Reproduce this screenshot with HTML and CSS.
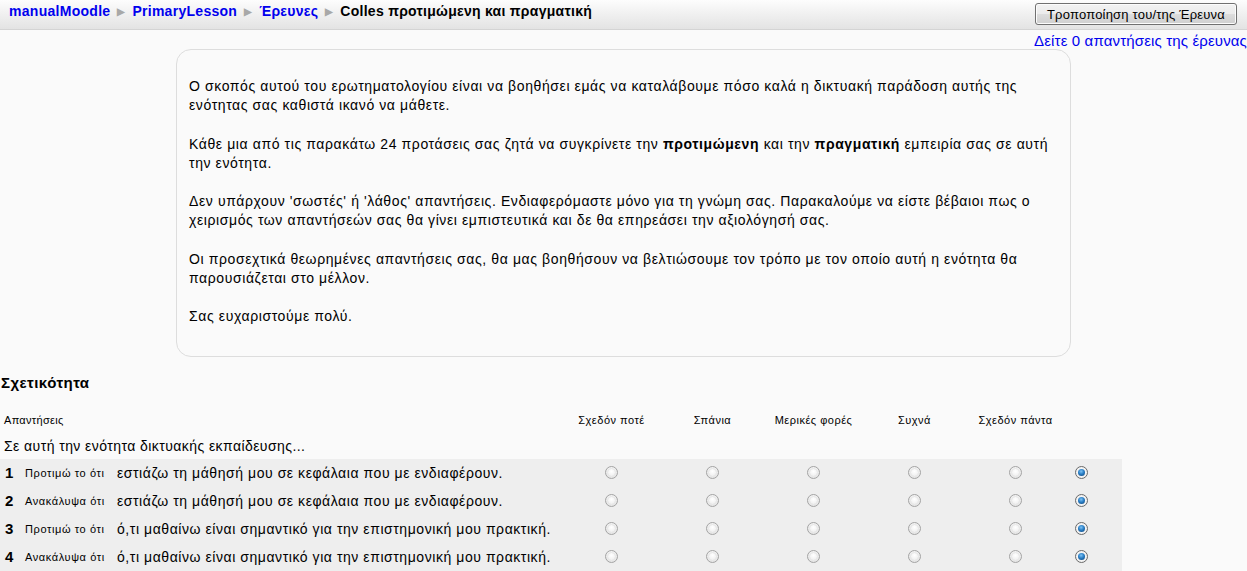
FILE: index.html
```html
<!DOCTYPE html>
<html lang="el">
<head>
<meta charset="utf-8">
<title>Colles προτιμώμενη και πραγματική</title>
<link rel="stylesheet" href="styles.css">
</head>
<body>
<header class="navbar">
  <nav class="breadcrumb">
    <a href="#">manualMoodle</a><span class="sep">&#9654;</span><a href="#">PrimaryLesson</a><span class="sep">&#9654;</span><a href="#">Έρευνες</a><span class="sep">&#9654;</span><span class="current">Colles προτιμώμενη και πραγματική</span>
  </nav>
  <button class="edit-btn" type="button">Τροποποίηση του/της Έρευνα</button>
</header>
<div class="reports"><a href="#">Δείτε 0 απαντήσεις της έρευνας</a></div>
<div class="intro-box">
  <p>Ο σκοπός αυτού του ερωτηματολογίου είναι να βοηθήσει εμάς να καταλάβουμε πόσο καλά η δικτυακή παράδοση αυτής της ενότητας σας καθιστά ικανό να μάθετε.</p>
  <p>Κάθε μια από τις παρακάτω 24 προτάσεις σας ζητά να συγκρίνετε την <b>προτιμώμενη</b> και την <b>πραγματική</b> εμπειρία σας σε αυτή την ενότητα.</p>
  <p>Δεν υπάρχουν 'σωστές' ή 'λάθος' απαντήσεις. Ενδιαφερόμαστε μόνο για τη γνώμη σας. Παρακαλούμε να είστε βέβαιοι πως ο χειρισμός των απαντήσεών σας θα γίνει εμπιστευτικά και δε θα επηρεάσει την αξιολόγησή σας.</p>
  <p>Οι προσεχτικά θεωρημένες απαντήσεις σας, θα μας βοηθήσουν να βελτιώσουμε τον τρόπο με τον οποίο αυτή η ενότητα θα παρουσιάζεται στο μέλλον.</p>
  <p>Σας ευχαριστούμε πολύ.</p>
</div>
<h2 class="section-title">Σχετικότητα</h2>
<div class="survey">
  <div class="grid head">
    <div class="cell-first small answers">Απαντήσεις</div>
    <div class="col small">Σχεδόν ποτέ</div>
    <div class="col small">Σπάνια</div>
    <div class="col small">Μερικές φορές</div>
    <div class="col small">Συχνά</div>
    <div class="col small">Σχεδόν πάντα</div>
    <div class="col"></div>
  </div>
  <div class="intro-q">Σε αυτή την ενότητα δικτυακής εκπαίδευσης...</div>
  <div class="grid row">
    <div class="cell-first"><span class="num">1</span><span class="lbl">Προτιμώ το ότι</span><span class="q">εστιάζω τη μάθησή μου σε κεφάλαια που με ενδιαφέρουν.</span></div>
    <div class="col"><input type="radio" name="q1"></div>
    <div class="col"><input type="radio" name="q1"></div>
    <div class="col"><input type="radio" name="q1"></div>
    <div class="col"><input type="radio" name="q1"></div>
    <div class="col"><input type="radio" name="q1"></div>
    <div class="col"><input type="radio" name="q1" checked></div>
  </div>
  <div class="grid row">
    <div class="cell-first"><span class="num">2</span><span class="lbl">Ανακάλυψα ότι</span><span class="q">εστιάζω τη μάθησή μου σε κεφάλαια που με ενδιαφέρουν.</span></div>
    <div class="col"><input type="radio" name="q2"></div>
    <div class="col"><input type="radio" name="q2"></div>
    <div class="col"><input type="radio" name="q2"></div>
    <div class="col"><input type="radio" name="q2"></div>
    <div class="col"><input type="radio" name="q2"></div>
    <div class="col"><input type="radio" name="q2" checked></div>
  </div>
  <div class="grid row">
    <div class="cell-first"><span class="num">3</span><span class="lbl">Προτιμώ το ότι</span><span class="q">ό,τι μαθαίνω είναι σημαντικό για την επιστημονική μου πρακτική.</span></div>
    <div class="col"><input type="radio" name="q3"></div>
    <div class="col"><input type="radio" name="q3"></div>
    <div class="col"><input type="radio" name="q3"></div>
    <div class="col"><input type="radio" name="q3"></div>
    <div class="col"><input type="radio" name="q3"></div>
    <div class="col"><input type="radio" name="q3" checked></div>
  </div>
  <div class="grid row">
    <div class="cell-first"><span class="num">4</span><span class="lbl">Ανακάλυψα ότι</span><span class="q">ό,τι μαθαίνω είναι σημαντικό για την επιστημονική μου πρακτική.</span></div>
    <div class="col"><input type="radio" name="q4"></div>
    <div class="col"><input type="radio" name="q4"></div>
    <div class="col"><input type="radio" name="q4"></div>
    <div class="col"><input type="radio" name="q4"></div>
    <div class="col"><input type="radio" name="q4"></div>
    <div class="col"><input type="radio" name="q4" checked></div>
  </div>
</div>
</body>
</html>
```

FILE: styles.css
```css
html, body {
  margin: 0;
  padding: 0;
}
body {
  background: #fafafa;
  font-family: "Liberation Sans", Arial, sans-serif;
  font-size: 14px;
  color: #000;
  overflow: hidden;
}
a {
  color: #0000ee;
  text-decoration: none;
}
.navbar {
  height: 29px;
  border-bottom: 1px solid #d4d4d4;
  background: linear-gradient(to bottom, #fdfdfd 0%, #f1f1f1 45%, #e3e3e3 100%);
  display: flex;
  justify-content: space-between;
  align-items: flex-start;
}
.breadcrumb {
  padding: 3px 0 0 9px;
  line-height: 16px;
  font-size: 14px;
  font-weight: bold;
  letter-spacing: 0.28px;
  white-space: nowrap;
}
.breadcrumb .sep {
  color: #a8a8a8;
  font-size: 10px;
  letter-spacing: 0;
  margin: 0 7px 0 7px;
  position: relative;
  top: -1px;
}
.breadcrumb .current {
  color: #000;
}
.edit-btn {
  margin: 3px 10px 0 0;
  height: 22px;
  width: 202px;
  padding: 0 6px;
  font-family: "Liberation Sans", Arial, sans-serif;
  font-size: 13px;
  letter-spacing: 0.2px;
  color: #000;
  border: 1px solid #707070;
  border-radius: 3px;
  background: linear-gradient(to bottom, #f2f2f2 0%, #ebebeb 50%, #dddddd 51%, #cfcfcf 100%);
  box-shadow: inset 0 0 0 1px #fcfcfc;
}
.reports {
  text-align: right;
  font-size: 15px;
  line-height: 17px;
  margin-top: 2px;
  letter-spacing: 0.15px;
  white-space: nowrap;
}
.intro-box {
  box-sizing: border-box;
  width: 895px;
  margin-left: 176px;
  padding: 27px 12px 29px 12px;
  border: 1px solid #dddddd;
  border-radius: 15px;
  background: #fafafa;
  line-height: 19.2px;
  letter-spacing: 0.6px;
}
.intro-box p {
  margin: 0 0 19.2px 0;
}
.intro-box p:last-child {
  margin-bottom: 0;
}
.section-title {
  margin: 17px 0 0 0;
  padding-left: 1px;
  font-size: 15px;
  line-height: 18px;
  font-weight: bold;
  letter-spacing: 0.45px;
}
.survey {
  width: 1122px;
}
.grid {
  display: grid;
  grid-template-columns: 561px repeat(5, 101px) 30px;
  align-items: center;
}
.small {
  font-size: 11px;
  letter-spacing: 0.5px;
}
.head {
  margin-top: 20px;
  line-height: 16px;
}
.head .cell-first {
  padding-left: 4px;
}
.head .answers {
  letter-spacing: 0.3px;
}
.col {
  text-align: center;
  display: flex;
  justify-content: center;
  align-items: center;
}
.intro-q {
  padding: 9px 0 4px 4px;
  line-height: 18px;
  font-size: 14px;
  letter-spacing: 0.43px;
}
.row {
  height: 28px;
  background: #eeeeee;
}
.cell-first {
  display: flex;
  align-items: center;
  white-space: nowrap;
}
.num {
  width: 25px;
  padding-left: 5px;
  box-sizing: border-box;
  font-weight: bold;
  font-size: 15px;
}
.lbl {
  width: 92px;
  font-size: 11px;
  letter-spacing: 0.6px;
}
.q {
  font-size: 14px;
  letter-spacing: 0.56px;
}
input[type="radio"] {
  -webkit-appearance: none;
  appearance: none;
  margin: 0;
  width: 13px;
  height: 13px;
  border-radius: 50%;
  border: 1px solid #a4a4a4;
  box-sizing: border-box;
  background: radial-gradient(circle at 50% 40%, #ffffff 0%, #f2f2f2 45%, #d9d9d9 100%);
  position: relative;
}
input[type="radio"]::after {
  content: "";
  position: absolute;
  left: 1px;
  top: 1px;
  width: 9px;
  height: 9px;
  border-radius: 50%;
  box-sizing: border-box;
  border: 1px solid #e6e6e6;
}
input[type="radio"]:checked {
  border-color: #6a6a6a;
  background: radial-gradient(circle at 50% 50%, #ffffff 0%, #eaeaea 100%);
}
input[type="radio"]:checked::after {
  left: 2px;
  top: 2px;
  width: 7px;
  height: 7px;
  border: none;
  background: radial-gradient(circle at 45% 35%, #7ec3f5 0%, #2a7fc6 45%, #0d3f73 100%);
}
```
